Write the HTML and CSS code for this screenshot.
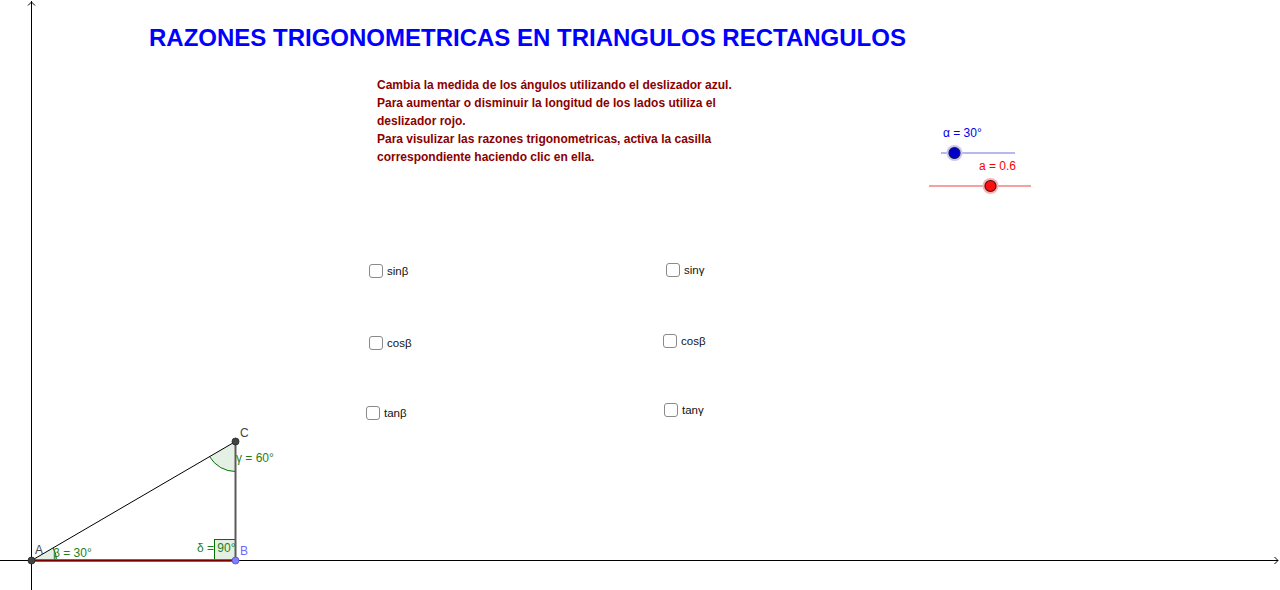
FILE: index.html
```html
<!DOCTYPE html>
<html lang="es">
<head>
<meta charset="utf-8">
<title>Razones trigonométricas</title>
<link rel="stylesheet" href="styles.css">
</head>
<body>
<div class="canvas">
  <svg class="graphics" width="1280" height="590" viewBox="0 0 1280 590" xmlns="http://www.w3.org/2000/svg">
    <!-- axes -->
    <line x1="31.5" y1="1" x2="31.5" y2="590" stroke="#000" stroke-width="1"/>
    <polyline points="28,5.5 31.5,2 35,5.5" fill="none" stroke="#000" stroke-width="1"/>
    <line x1="0" y1="560.5" x2="1278" y2="560.5" stroke="#000" stroke-width="1"/>
    <polyline points="1274.5,557 1278,560.5 1274.5,564" fill="none" stroke="#000" stroke-width="1"/>

    <!-- angle sectors -->
    <path d="M31.5,560.5 L56.5,560.5 A25,25 0 0 0 53.15,548 Z" fill="#e4f0e4" stroke="none"/>
    <path d="M56.5,560.5 A25,25 0 0 0 53.15,548" fill="none" stroke="#007000" stroke-width="1"/>
    <path d="M235.5,441.5 L235.5,471.5 A30,30 0 0 1 209.56,456.57 Z" fill="#e4f0e4" stroke="none"/>
    <path d="M235.5,471.5 A30,30 0 0 1 209.56,456.57" fill="none" stroke="#007000" stroke-width="1"/>
    <rect x="214.5" y="539.5" width="21" height="21" fill="#e4f0e4" stroke="#007000" stroke-width="1"/>

    <!-- triangle -->
    <line x1="31.5" y1="560.5" x2="235.5" y2="441.5" stroke="#000" stroke-width="1"/>
    <line x1="235.5" y1="441.5" x2="235.5" y2="560.5" stroke="#5a5a5a" stroke-width="2"/>
    <line x1="31.5" y1="560.5" x2="235.5" y2="560.5" stroke="#ee3030" stroke-width="3"/>
    <line x1="31.5" y1="560.5" x2="235.5" y2="560.5" stroke="#7a0000" stroke-width="1.2"/>

    <!-- points -->
    <circle cx="31.5" cy="560.5" r="3.5" fill="#444" stroke="#222" stroke-width="0.8"/>
    <circle cx="235.5" cy="441.5" r="3.5" fill="#444" stroke="#222" stroke-width="0.8"/>
    <circle cx="235.5" cy="560.5" r="3.5" fill="#8080ff" stroke="#5050c0" stroke-width="0.8"/>

    <!-- slider alpha -->
    <line x1="941" y1="153" x2="1015" y2="153" stroke="#b8b8f0" stroke-width="2"/>
    <circle cx="954.5" cy="153" r="8" fill="#c8c8f4"/>
    <circle cx="954.5" cy="153" r="5.5" fill="#0000cc" stroke="#1a1a40" stroke-width="1.2"/>

    <!-- slider a -->
    <line x1="929" y1="186" x2="1031" y2="186" stroke="#f6a0a0" stroke-width="2"/>
    <circle cx="990.5" cy="186" r="8" fill="#f4b4b4"/>
    <circle cx="990.5" cy="186" r="5.5" fill="#ff1010" stroke="#501010" stroke-width="1.2"/>
  </svg>

  <h1 class="title">RAZONES TRIGONOMETRICAS EN TRIANGULOS RECTANGULOS</h1>

  <p class="instructions">Cambia la medida de los ángulos utilizando el deslizador azul.<br>Para aumentar o disminuir la longitud de los lados utiliza el<br>deslizador rojo.<br>Para visulizar las razones trigonometricas, activa la casilla<br>correspondiente haciendo clic en ella.</p>

  <span class="label slider-alpha">α = 30°</span>
  <span class="label slider-a">a = 0.6</span>

  <label class="check" style="left:369px;top:264px"><span class="box"></span><span class="check-text">sinβ</span></label>
  <label class="check" style="left:369px;top:336px"><span class="box"></span><span class="check-text">cosβ</span></label>
  <label class="check" style="left:366px;top:406px"><span class="box"></span><span class="check-text">tanβ</span></label>
  <label class="check" style="left:666px;top:263px"><span class="box"></span><span class="check-text">sinγ</span></label>
  <label class="check" style="left:663px;top:334px"><span class="box"></span><span class="check-text">cosβ</span></label>
  <label class="check" style="left:664px;top:403px"><span class="box"></span><span class="check-text">tanγ</span></label>

  <span class="label pt pt-a">A</span>
  <span class="label pt pt-c">C</span>
  <span class="label pt pt-b">B</span>
  <span class="label angle ang-beta">β = 30°</span>
  <span class="label angle ang-gamma">γ = 60°</span>
  <span class="label angle ang-delta">δ = 90°</span>
</div>
</body>
</html>
```

FILE: styles.css
```css
html, body {
  margin: 0;
  padding: 0;
  background: #fff;
}

.canvas {
  position: relative;
  width: 1280px;
  height: 590px;
  overflow: hidden;
  background: #fff;
  font-family: "Liberation Sans", Arial, sans-serif;
}

.graphics {
  position: absolute;
  left: 0;
  top: 0;
}

.title {
  position: absolute;
  left: 149px;
  top: 26px;
  margin: 0;
  font-size: 24px;
  line-height: 24px;
  font-weight: bold;
  color: #0000ff;
  white-space: nowrap;
}

.instructions {
  position: absolute;
  left: 377px;
  top: 76px;
  margin: 0;
  font-size: 12px;
  line-height: 18px;
  font-weight: bold;
  color: #8b0000;
  white-space: nowrap;
}

.label {
  position: absolute;
  font-size: 12px;
  line-height: 14px;
  white-space: nowrap;
}

.slider-alpha {
  left: 943px;
  top: 126px;
  color: #0000e6;
}

.slider-a {
  left: 979px;
  top: 159px;
  color: #ff0000;
}

.check {
  position: absolute;
  display: flex;
  align-items: center;
  gap: 4px;
  font-size: 11.5px;
  color: #111;
}

.box {
  width: 12px;
  height: 12px;
  border: 1px solid #8a8a8a;
  border-radius: 3px;
  background: #fff;
}

.check-text {
  line-height: 14px;
}

.pt {
  font-size: 12px;
  color: #444;
}

.pt-a { left: 35px; top: 543px; }
.pt-c { left: 240px; top: 426px; }
.pt-b { left: 240px; top: 544px; color: #6a6aff; }

.angle {
  color: #1d801d;
  font-size: 12px;
}

.ang-beta { left: 53px; top: 546px; }
.ang-gamma { left: 236px; top: 451px; }
.ang-delta { left: 197px; top: 541px; }
```
